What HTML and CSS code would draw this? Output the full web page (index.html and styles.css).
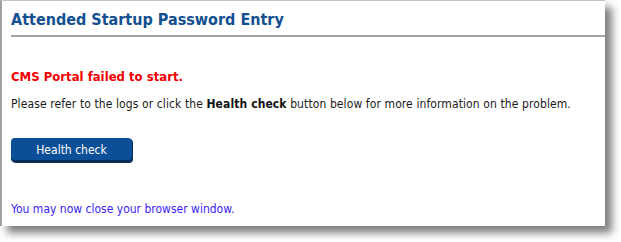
FILE: index.html
```html
<!DOCTYPE html>
<html lang="en">
<head>
    <meta charset="UTF-8">
    <title>Attended Startup Password Entry</title>
    <link rel="stylesheet" href="styles.css">
</head>
<body>
    <div class="panel">
        <h1>Attended Startup Password Entry</h1>
        <div class="error">CMS Portal failed to start.</div>
        <p class="info">Please refer to the logs or click the <b>Health check</b> button below for more information on the problem.</p>
        <button class="btn" type="button">Health check</button>
        <p class="close">You may now close your browser window.</p>
    </div>
</body>
</html>
```

FILE: styles.css
```css
html, body {
    height: 100%;
}

body {
    margin: 0;
    padding: 0;
    min-height: 242px;
    background: #fff;
    font-family: "DejaVu Sans Condensed", "DejaVu Sans", Tahoma, sans-serif;
    color: #1a1a1a;
}

.panel {
    width: 605px;
    height: 226px;
    box-sizing: border-box;
    padding: 9px 0 0 9px;
    background: #fff;
    border-left: 2px solid #a0a0a0;
    border-top: 1px solid #c4c4c4;
    box-shadow: 7px 7px 8px rgba(0, 0, 0, 0.5);
    overflow: hidden;
}

h1 {
    margin: 0;
    padding: 0 0 5px 0;
    font-size: 16px;
    color: #134f91;
    border-bottom: 2px solid #a3a3a3;
    line-height: 20px;
}

.error {
    margin-top: 32px;
    font-size: 13px;
    font-weight: bold;
    color: #f00000;
}

.info {
    margin: 13px 0 0 0;
    font-size: 12px;
    letter-spacing: 0.1px;
}

.info b {
    color: #111;
}

.btn {
    display: block;
    margin-top: 27px;
    width: 121px;
    height: 24px;
    padding: 0;
    border: none;
    border-radius: 4px;
    background: #0c4f99;
    box-shadow: inset 0 -2px 0 #072a52, 1px 1px 0 #0a2c55;
    color: #fff;
    font-family: "DejaVu Sans Condensed", "DejaVu Sans", Tahoma, sans-serif;
    font-size: 12px;
}

.close {
    margin: 40px 0 0 0;
    font-size: 12px;
    color: #3a1ef0;
}
```
